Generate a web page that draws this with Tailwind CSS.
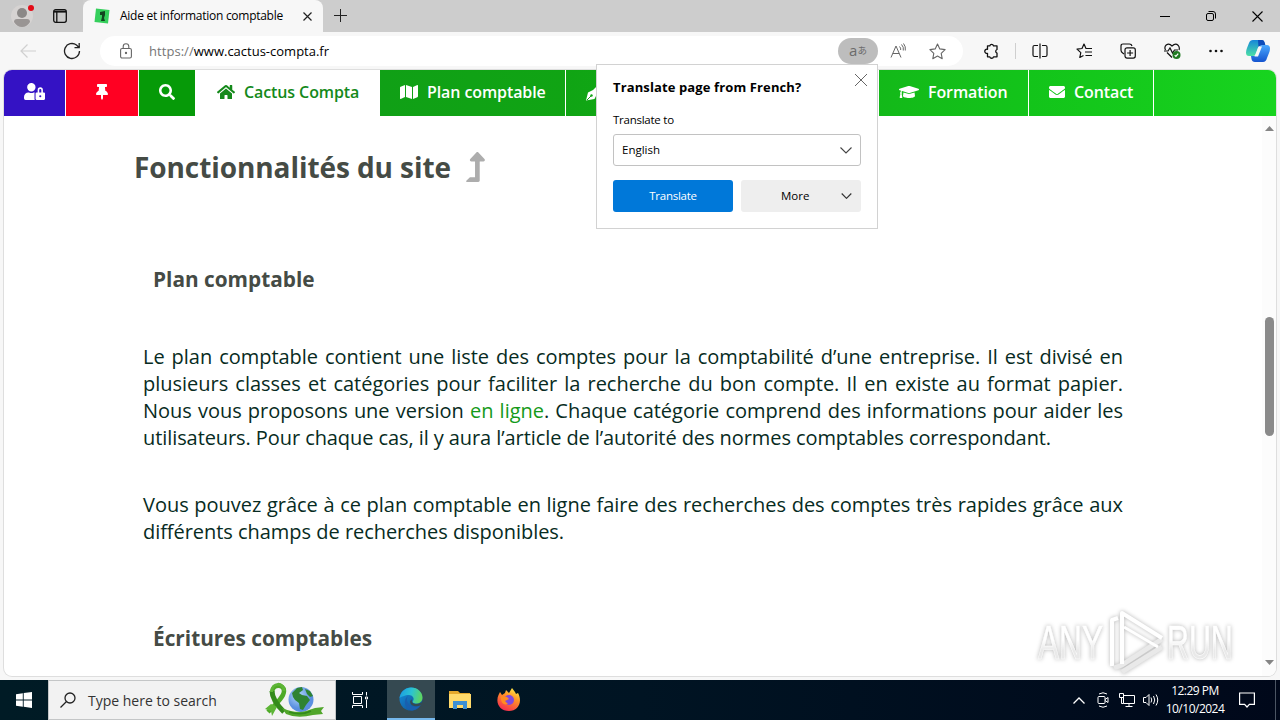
<!DOCTYPE html>
<html lang="fr">
  <head>
    <meta charset="UTF-8" />
    <meta name="viewport" content="width=device-width, initial-scale=1.0" />
    <title>Aide et information comptable</title>
    <script src="https://cdn.jsdelivr.net/npm/@tailwindcss/browser@4"></script>
  </head>
  <body class="w-[1280px] h-[720px] overflow-hidden flex flex-col bg-[#f7f7f7] font-['Open_Sans',sans-serif] text-black">
    <!-- tab strip -->
    <header class="h-8 shrink-0 flex bg-[#cdcdcd]">
      <div class="w-[83px] h-8 flex items-center pl-[11px] gap-[18px] bg-[#cacaca] rounded-br-md">
        <svg class="w-6 h-8" viewBox="0 0 24 32">
          <circle cx="11" cy="16" r="11" fill="#d6d3d2" />
          <circle cx="11" cy="13" r="5" fill="#8b8887" />
          <path d="M3 22q0-3 3-3h10q3 0 3 3-3 5-8 5t-8-5z" fill="#999594" />
          <circle cx="20" cy="8" r="3" fill="#e30b17" />
        </svg>
        <svg class="w-[14px] h-[14px]" viewBox="0 0 14 14" fill="none" stroke="#111" stroke-width="1.3">
          <rect x=".7" y=".7" width="12.6" height="12.6" rx="2" />
          <path d="M1 2.600h12" stroke-width="2" /><path d="M3.800 3v10" />
        </svg>
      </div>
      <div class="w-60 h-8 flex items-center bg-[#f7f7f7] rounded-t-lg pl-[11px]">
        <svg class="w-4 h-4" viewBox="0 0 16 16">
          <path d="M2 .5L15.500 2 14 15.500.500 14z" fill="#35cf5c" />
          <path d="M6 4l5-1v4l-1 3 1 3H7l1-4V7L6 7z" fill="#12451f" />
        </svg>
        <span class="ml-[10px] w-[168px] text-[12px] tracking-[-0.27px] whitespace-nowrap">Aide et information comptable</span>
        <svg class="ml-[15px] w-[9px] h-[9px]" viewBox="0 0 9 9" stroke="#222" stroke-width="1.2"><path d="M.5.5l8 8M8.500.5l-8 8" /></svg>
      </div>
      <svg class="ml-[11px] mt-[9px] w-[14px] h-[14px]" viewBox="0 0 14 14" stroke="#222"><path d="M6.500 0v13M0 6.500h13" /></svg>
      <div class="ml-auto mr-[17px] flex items-center gap-[36px]">
        <svg class="w-[10px] h-[10px]" viewBox="0 0 10 10" stroke="#000"><path d="M0 5.500h10" /></svg>
        <svg class="w-[10px] h-[10px]" viewBox="0 0 10 10" fill="none" stroke="#000"><rect x=".5" y="2.500" width="7" height="7" rx="1.500" /><path d="M2.500.5H7q2.500 0 2.500 2.500v4.500" /></svg>
        <svg class="w-[11px] h-[11px]" viewBox="0 0 11 11" stroke="#000" stroke-width="1.1"><path d="M.5.5l10 10M10.500.5l-10 10" /></svg>
      </div>
    </header>

    <!-- toolbar -->
    <div class="h-[38px] shrink-0 flex items-center pl-5">
      <svg class="w-4 h-4" viewBox="0 0 16 16" fill="none" stroke="#d0d0d0" stroke-width="1.2"><path d="M16 8H1M7.500 1.500L1 8l6.500 6.500" /></svg>
      <svg class="ml-[27px] w-[18px] h-[18px]" viewBox="0 0 18 18" fill="none" stroke="#222" stroke-width="1.300"><path d="M16.500 9A7.500 7.500 0 1 1 13.500 3L16 5.500M16.200 1v4.700h-4.700" /></svg>
      <div class="ml-[19px] w-[863px] h-[30px] rounded-full bg-white flex items-center">
        <svg class="ml-5 w-3 h-4" viewBox="0 0 12 16" fill="none" stroke="#666" stroke-width="1.100"><rect x=".6" y="5.500" width="10.800" height="9.500" rx="1.500" /><path d="M3.200 5.500V3.500a2.800 2.800 0 0 1 5.600 0v2" /><circle cx="6" cy="10" r=".6" fill="#666" /></svg>
        <span class="ml-[17px] pt-px text-[13px] whitespace-nowrap"><span class="text-[#767676] tracking-[0.05px]">https://</span><span>www.cactus-compta.fr</span></span>
        <div class="ml-auto mr-3 w-10 h-[26px] rounded-full bg-[#bdbdbd] flex items-center justify-center text-[#6b6b6b] leading-none">
          <span class="text-[15px] pb-px">a</span><span class="text-[9.500px] font-['Noto_Sans_CJK_JP',sans-serif]">あ</span>
        </div>
        <svg class="w-4 h-4" viewBox="0 0 16 16" fill="none" stroke="#666"><path d="M1 14.500L6 3l5 11.500M2.800 10.500h6.400M9.500 3.500q1.500 1.500 1.200 3.500M11.500 1.500q2.500 2.500 1.800 6M13.500.5q2.500 3 1.800 7" /></svg>
        <svg class="ml-[23px] mr-[17px] w-[17px] h-[17px]" viewBox="0 0 17 17" fill="none" stroke="#666" stroke-width="1.100" stroke-linejoin="round"><path d="M8.500 1l2.300 4.900 5.300.7-3.900 3.700 1 5.400-4.700-2.600-4.700 2.600 1-5.400L.9 6.600l5.300-.7z" /></svg>
      </div>
      <svg class="ml-[20px] w-4 h-4" viewBox="0 0 16 16" fill="none" stroke="#111" stroke-width="1.300" stroke-linejoin="round"><path d="M4.500 2.800h2.300a1.900 1.900 0 0 1 3.700 0h3.500v3.700a1.900 1.900 0 0 0 0 3.600v3.700h-3.500a1.900 1.900 0 0 1-3.700 0H4.500v-3.500a2.100 2.100 0 1 1 0-4z" /></svg>
      <div class="ml-4 w-px h-4 bg-[#cfcfcf]"></div>
      <svg class="ml-4 w-4 h-4" viewBox="0 0 16 16" fill="none" stroke="#111" stroke-width="1.200"><path d="M6 2.500H2.500q-1.500 0-1.500 1.500v8q0 1.500 1.500 1.500H6M10 2.500h3.500q1.500 0 1.500 1.500v8q0 1.500-1.500 1.500H10M8 .5v15" /></svg>
      <svg class="ml-[28px] w-[17px] h-4" viewBox="0 0 17 16" fill="none" stroke="#111" stroke-width="1.200" stroke-linejoin="round"><path d="M10 5.500L8 1 6 5.500l-5 .6 3.800 3.500L3.800 14.500 7.500 12.500M9.500 5.500H16M9 9h7M9.500 12.500H16" /></svg>
      <svg class="ml-[27px] w-4 h-4" viewBox="0 0 16 16" fill="none" stroke="#111" stroke-width="1.200"><path d="M4 11l-1-.8q-2-1.200-2-3V3q0-2 2-2h6.500q2 0 2.500 2" /><rect x="5" y="4.800" width="10.300" height="10.300" rx="2" /><path d="M10.100 7v6M7.100 10h6" /></svg>
      <svg class="ml-[28px] w-[17px] h-4" viewBox="0 0 17 16" fill="none" stroke="#111" stroke-width="1.200"><path d="M1.500 7Q0 4 2.200 2 5.200-.2 8 3q3.500-3.200 6-.8Q16 4.300 15 7M3 9.500L8 14.500M0 8h4l2-3 2.500 5 2-3H14" /><circle cx="12.500" cy="12" r="4" fill="#217b22" stroke="none" /><path d="M10.700 12.200l1.200 1.200 2.300-2.800" stroke="#fff" /></svg>
      <svg class="ml-[28px] w-[14px] h-4" viewBox="0 0 14 16" fill="#111"><circle cx="1.500" cy="8" r="1.300" /><circle cx="7" cy="8" r="1.300" /><circle cx="12.500" cy="8" r="1.300" /></svg>
      <svg class="ml-[23px] w-6 h-6" viewBox="0 0 24 24">
        <defs>
          <linearGradient id="cp1" x1="0" y1="0" x2="0" y2="1"><stop offset="0" stop-color="#1686d9" /><stop offset="1" stop-color="#4be0a6" /></linearGradient>
          <linearGradient id="cp2" x1="0" y1="0" x2="0" y2="1"><stop offset="0" stop-color="#4ba9ff" /><stop offset="1" stop-color="#1454cf" /></linearGradient>
        </defs>
        <path d="M7 1h8q3 0 3.500 3l.5 2h-3q-3 0-4 3l-2 6q-1 2-3 2H3Q0 17 0 13.500q0-2 1-4.500l2-5q1-3 4-3z" fill="url(#cp1)" />
        <path d="M12 1h4q2 0 2.500 2l1 3.500h-4q-2 0-3 2z" fill="#0e4dba" />
        <path d="M17 23H9q-3 0-3.500-3L5 17h3q2.500 0 3.500-3l2-6q1-2 3-2H21q3 0 3 3.500 0 2-1 4.500l-2 5q-1 4-4 4z" fill="url(#cp2)" />
        <path d="M12.500 7.500h3.500L12 17.500H8.500z" fill="#f7f7f7" />
      </svg>
    </div>

    <!-- page -->
    <main class="mx-1 h-[606px] shrink-0 flex flex-col bg-white rounded-lg overflow-hidden shadow-[0_0_0_1px_#dedede]">
      <nav class="h-[46px] shrink-0 flex gap-px text-white text-[16px] tracking-[-0.1px] font-semibold bg-white">
        <a class="w-[61px] flex items-center justify-center bg-[#3412c4]">
          <svg class="w-[21px] h-[17px] mt-[-3px]" viewBox="0 0 640 512" fill="currentColor"><path d="M224 256A128 128 0 1 0 96 128a128 128 0 0 0 128 128zm96 64a63.080 63.080 0 0 1 8.100-30.500c-4.800-.5-9.500-1.500-14.500-1.500h-16.700a174.080 174.080 0 0 1-145.800 0h-16.700A134.430 134.430 0 0 0 0 422.400V464a48 48 0 0 0 48 48h280.900a63.540 63.540 0 0 1-8.900-32zm288-32h-32v-80a80 80 0 0 0-160 0v80h-32a32 32 0 0 0-32 32v160a32 32 0 0 0 32 32h224a32 32 0 0 0 32-32V320a32 32 0 0 0-32-32zM496 432a32 32 0 1 1 32-32 32 32 0 0 1-32 32zm32-144h-64v-80a32 32 0 0 1 64 0z" /></svg>
        </a>
        <a class="w-[72px] flex items-center justify-center bg-[#ff0022]">
          <svg class="w-3 h-4 mt-[-2px]" viewBox="0 0 384 512" fill="currentColor"><path d="M298.028 214.267L285.793 96H328c13.255 0 24-10.745 24-24V24c0-13.255-10.745-24-24-24H56C42.745 0 32 10.745 32 24v48c0 13.255 10.745 24 24 24h42.207L85.972 214.267C37.465 236.820 0 277.261 0 328c0 13.255 10.745 24 24 24h136v104l24.800 51.600c3 5.900 11.400 5.900 14.300 0L224 456V352h136c13.255 0 24-10.745 24-24 0-51.183-37.983-91.420-85.972-113.733z" /></svg>
        </a>
        <a class="w-14 flex items-center justify-center bg-[#069a08]">
          <svg class="w-4 h-4 mt-[-2px]" viewBox="0 0 512 512" fill="currentColor"><path d="M505 442.700L405.300 343c-4.500-4.500-10.600-7-17-7H372c27.600-35.300 44-79.700 44-128C416 93.100 322.900 0 208 0S0 93.100 0 208s93.100 208 208 208c48.300 0 92.700-16.400 128-44v16.300c0 6.400 2.500 12.500 7 17l99.700 99.700c9.400 9.400 24.600 9.400 33.900 0l28.300-28.300c9.400-9.400 9.400-24.600.1-34zM208 336c-70.700 0-128-57.200-128-128 0-70.700 57.200-128 128-128 70.700 0 128 57.200 128 128 0 70.700-57.200 128-128 128z" /></svg>
        </a>
        <a class="w-[183px] flex items-center pl-[21px] pb-0.5 bg-white text-[#14891a]">
          <svg class="w-[18px] h-4 mr-[9px]" viewBox="0 0 576 512" fill="currentColor"><path d="M280.370 148.260L96 300.110V464a16 16 0 0 0 16 16l112.060-.29a16 16 0 0 0 15.920-16V368a16 16 0 0 1 16-16h64a16 16 0 0 1 16 16v95.640a16 16 0 0 0 16 16.050L464 480a16 16 0 0 0 16-16V300L295.670 148.260a12.190 12.190 0 0 0-15.300 0zM571.600 251.470L488 182.560V44.050a12 12 0 0 0-12-12h-56a12 12 0 0 0-12 12v72.610L318.470 43a48 48 0 0 0-61 0L4.340 251.470a12 12 0 0 0-1.600 16.900l25.500 31A12 12 0 0 0 45.150 301l235.220-193.740a12.190 12.190 0 0 1 15.300 0L530.900 301a12 12 0 0 0 16.900-1.600l25.500-31a12 12 0 0 0-1.700-16.930z" /></svg>
          <span class="whitespace-nowrap">Cactus Compta</span>
        </a>
        <a class="w-[185px] flex items-center pl-5 pb-0.5 bg-linear-to-r from-[#10a016] to-[#10a414]">
          <svg class="w-[18px] h-4 mr-[9px]" viewBox="0 0 576 512" fill="currentColor"><path d="M0 117.660v346.320c0 11.320 11.430 19.060 21.940 14.860L160 416V32L20.120 87.950A32 32 0 0 0 0 117.660zM192 416l192 64V96L192 32v384zM554.060 33.160L416 96v384l139.880-55.950A32 32 0 0 0 576 394.340V48.020c0-11.320-11.430-19.060-21.940-14.860z" /></svg>
          <span class="whitespace-nowrap">Plan comptable</span>
        </a>
        <a class="w-[312px] flex items-center pl-[20px] bg-linear-to-r from-[#10a414] to-[#13b817]">
          <svg class="w-4 h-4" viewBox="0 0 16 16"><path d="M0 15.500L2 7.500 7 5l5-5 4 4-5 5-2.500 5z" fill="currentColor" /><path d="M1 15l4-4" stroke="#10a414" /><circle cx="5.500" cy="10.500" r="1.200" fill="#10a414" /></svg>
        </a>
        <a class="w-[149px] flex items-center pl-5 pb-0.5 bg-linear-to-r from-[#13b919] to-[#13c41a]">
          <svg class="w-5 h-4 mr-[9px]" viewBox="0 0 640 512" fill="currentColor"><path d="M622.340 153.200L343.400 67.500c-15.200-4.670-31.600-4.670-46.790 0L17.660 153.200c-23.540 7.230-23.540 38.360 0 45.590l48.630 14.940c-10.670 13.190-17.230 29.280-17.880 46.900C38.780 266.150 32 276.110 32 288c0 10.780 5.680 19.850 13.860 25.650L20.330 428.530C18.110 438.520 25.710 448 35.940 448h56.110c10.240 0 17.840-9.480 15.620-19.470L82.140 313.650C90.320 307.850 96 298.780 96 288c0-11.570-6.470-21.250-15.660-26.870.76-15.020 8.440-28.300 20.690-36.720L296.600 284.500c9.060 2.780 26.440 6.250 46.790 0l278.950-85.700c23.550-7.240 23.550-38.360 0-45.600zM352.790 315.090c-28.530 8.760-52.840 3.920-65.590 0l-145.020-44.550L128 384c0 35.350 85.960 64 192 64s192-28.650 192-64l-14.180-113.470-145.030 44.560z" /></svg>
          <span class="whitespace-nowrap">Formation</span>
        </a>
        <a class="w-[124px] flex items-center pl-5 pb-0.5 bg-linear-to-r from-[#13c41a] to-[#15cb1c]">
          <svg class="w-4 h-4 mr-[9px]" viewBox="0 0 512 512" fill="currentColor"><path d="M502.300 190.800c3.900-3.100 9.700-.2 9.700 4.700V400c0 26.500-21.500 48-48 48H48c-26.500 0-48-21.500-48-48V195.600c0-5 5.700-7.800 9.700-4.700 22.400 17.400 52.100 39.500 154.100 113.600 21.100 15.400 56.700 47.800 92.200 47.600 35.700.3 72-32.800 92.300-47.600 102-74.100 131.600-96.300 154-113.700zM256 320c23.200.4 56.600-29.200 73.400-41.400 132.700-96.300 142.800-104.700 173.400-128.700 5.800-4.500 9.200-11.500 9.200-18.900v-19c0-26.500-21.500-48-48-48H48c-26.500 0-48 21.500-48 48v19c0 7.400 3.400 14.300 9.200 18.900 30.600 23.900 40.700 32.400 173.400 128.700 16.800 12.200 50.200 41.800 73.400 41.400z" /></svg>
          <span class="whitespace-nowrap">Contact</span>
        </a>
        <div class="flex-1 bg-linear-to-r from-[#15cb1c] to-[#17d41f]"></div>
      </nav>

      <div class="flex-1 flex">
        <article class="w-[1258px] pl-[130px] pt-[30px]">
          <div class="flex items-center h-[42px]">
            <h1 class="w-[332px] text-[28px] leading-[42px] tracking-[-0.08px] font-bold text-[#454b45] whitespace-nowrap">Fonctionnalités du site</h1>
            <svg class="w-[19px] h-[30px]" viewBox="0 0 320 512" fill="#adadad"><path d="M313.553 119.669L209.587 7.666c-9.485-10.214-25.676-10.229-35.174 0L70.438 119.669C56.232 134.969 67.062 160 88.025 160H152v272H68.024a12 12 0 0 0-8.485 3.515l-56 56C-4.021 499.074 1.333 512 12.024 512H208c13.255 0 24-10.745 24-24V160h63.966c20.878 0 31.851-24.969 17.587-40.331z" /></svg>
          </div>
          <h2 class="mt-[76px] ml-[19px] text-[20.8px] leading-[30px] font-bold text-[#454b45]">Plan comptable</h2>
          <div class="mt-[49px] ml-[9px] w-[980px] text-[20px] leading-[27px] tracking-[-0.02px] text-[#072b22] whitespace-nowrap [text-align-last:justify]">
            <p>Le plan comptable contient une liste des comptes pour la comptabilité d’une entreprise. Il est divisé en</p>
            <p>plusieurs classes et catégories pour faciliter la recherche du bon compte. Il en existe au format papier.</p>
            <p>Nous vous proposons une version <a class="text-[#159a1a]">en ligne</a>. Chaque catégorie comprend des informations pour aider les</p>
            <p class="w-[908px] tracking-[-0.08px]">utilisateurs. Pour chaque cas, il y aura l’article de l’autorité des normes comptables correspondant.</p>
            <p class="mt-10">Vous pouvez grâce à ce plan comptable en ligne faire des recherches des comptes très rapides grâce aux</p>
            <p class="w-[421px] tracking-[-0.05px]">différents champs de recherches disponibles.</p>
          </div>
          <h2 class="mt-[78px] ml-[19px] text-[20.8px] leading-[30px] font-bold text-[#454b45]">Écritures comptables</h2>
        </article>
        <div class="w-[14px] flex flex-col items-center bg-[#fcfcfc] pt-[9px] pb-[10px]">
          <svg class="w-[9px] h-[6px] ml-px" viewBox="0 0 9 6"><path d="M0 6l4.500-5L9 6z" fill="#858585" /></svg>
          <div class="mt-[186px] w-[9px] h-[119px] rounded-full bg-[#8a8a8a]"></div>
          <svg class="mt-auto w-[9px] h-[6px] ml-px" viewBox="0 0 9 6"><path d="M0 0l4.500 5L9 0z" fill="#858585" /></svg>
        </div>
      </div>
    </main>

    <!-- taskbar -->
    <footer class="mt-1 h-10 shrink-0 flex items-center bg-linear-to-r from-[#001b25] via-[#001423] to-[#00081a] text-white">
      <svg class="ml-4 w-4 h-4" viewBox="0 0 16 16" fill="#fff"><path d="M0 2.200L6.800 1.200v6.300H0zM7.700 1.100L16 0v7.500H7.700zM0 8.400h6.800v6.400L0 13.800zM7.700 8.400H16V16l-8.300-1.200z" /></svg>
      <div class="ml-[16px] w-72 h-10 flex items-center bg-[#f2f2f2] border border-[#c4c6c7] text-[#333]">
        <svg class="ml-[11px] w-4 h-4" viewBox="0 0 16 16" fill="none" stroke="#222" stroke-width="1.300"><circle cx="10" cy="6" r="5" /><path d="M6.500 9.500L.5 15.500" /></svg>
        <span class="ml-[12px] w-[177px] text-[14px] whitespace-nowrap">Type here to search</span>
        <svg class="w-[60px] h-9" viewBox="0 0 60 36">
          <defs><radialGradient id="sea" cx=".4" cy=".35"><stop offset="0" stop-color="#b4dafa" /><stop offset="1" stop-color="#5b8fe0" /></radialGradient></defs>
          <circle cx="36" cy="17.500" r="12.500" fill="url(#sea)" />
          <path d="M27 11l5-5 5-1 1 3-4 3 3 2 5 1 3 4-4 5-3 5-3-1-1-6-4-3-2-3zM40 7l5 2 3 5-3 1-3-3z" fill="#2f8332" />
          <path d="M7 10c1-8 12-8 12-1 0 6-8 13-16 21" fill="none" stroke="#4eaa26" stroke-width="4.500" />
          <path d="M7 9c0 7 4 13 12 21" fill="none" stroke="#338a1b" stroke-width="5" />
          <path d="M6.500 10C7 0 19 0 19 9" fill="none" stroke="#5db536" stroke-width="3" />
          <path d="M17 26q14 6 24 3l9-3 9-1-3 4 2 3-10 1q-16 4-27-1z" fill="#50a62a" />
          <path d="M24 30q12 4 22-1" fill="none" stroke="#338a1b" stroke-width="1.500" />
          <path d="M0 27l6 2 1 5 5-9-6-3z" fill="#5db536" />
        </svg>
      </div>
      <svg class="ml-4 w-4 h-4" viewBox="0 0 16 16" fill="none" stroke="#fff"><path d="M.5 0v2.500h10V0M.5 16v-2.500h10V16M1.500 4.500h8v7h-8zM14.500 0v3.500M14.500 8v8M13.500 5h2v2h-2z" /></svg>
      <div class="ml-[19px] w-12 h-10 flex items-center justify-center bg-[#354951] border-b-2 border-[#76b9ed]">
        <svg class="w-6 h-6" viewBox="0 0 24 24">
          <defs>
            <linearGradient id="e1" x1="0" y1=".3" x2="1" y2=".5"><stop offset="0" stop-color="#1b9de2" /><stop offset=".5" stop-color="#2bc3d2" /><stop offset="1" stop-color="#60d65c" /></linearGradient>
            <linearGradient id="e2" x1="0" y1="0" x2="1" y2="1"><stop offset="0" stop-color="#1490df" /><stop offset="1" stop-color="#114a8b" /></linearGradient>
          </defs>
          <circle cx="12" cy="12" r="11.500" fill="url(#e2)" />
          <path d="M.5 11C2 4 7 .5 12 .5c7 0 11.500 5 11.500 10 0 4-3 6-6 6-3 0-4.500-1-3.500-2.500 2-3-1-6-4-6-4 0-8 2-9.500 3z" fill="url(#e1)" />
          <path d="M9 9c-3 5 1 11 7 10.500 3 0 5-1.500 6-2.500-2 4.500-6 6.500-10 6.500C5 22 4 12 9 9z" fill="#195fae" />
          <path d="M13 12.500c-1 2.500 1 4.500 4.500 4.500 2.500 0 4.500-1 6.500-2.500L22 18c-4 2-9 1.500-10.500-1.500-1-2 0-3.500 1.500-4z" fill="#354951" />
        </svg>
      </div>
      <svg class="ml-[14px] w-[22px] h-[20px]" viewBox="0 0 22 20"><path d="M0 1h9l2 2h10v14H0z" fill="#e5a92c" /><path d="M0 4h22v14H0z" fill="#ffda6b" /><path d="M4 11h14v8h-4v-4H8v4H4z" fill="#3b8fd4" /></svg>
      <svg class="ml-[26px] w-6 h-6" viewBox="0 0 24 24">
        <defs><linearGradient id="ff" x1=".8" y1="0" x2=".3" y2="1"><stop offset="0" stop-color="#fff04a" /><stop offset=".4" stop-color="#ff9326" /><stop offset="1" stop-color="#f52a50" /></linearGradient></defs>
        <path d="M3 4l2 3 3-2 1-3 3 3 3-5 3 4 1 2 2-1c5 9 0 18-9 18S-2 15 1.500 7z" fill="url(#ff)" />
        <circle cx="12" cy="12" r="5" fill="#8049dc" />
        <path d="M4 8l6 1 2 2-4 2 3 3c-5 2-8-3-7-8z" fill="#ff8b21" />
      </svg>
      <div class="ml-auto flex items-center">
        <svg class="w-3 h-[7px]" viewBox="0 0 12 7" fill="none" stroke="#fff" stroke-width="1.300"><path d="M.5 6.500L6 1l5.500 5.500" /></svg>
        <svg class="ml-3 w-3 h-4" viewBox="0 0 12 16" fill="none" stroke="#fff"><rect x="1" y="4.500" width="7" height="7" rx="1" /><path d="M8 7.500l3-2v5l-3-2M2 2q4-2.500 8 0M2 14q4 2.500 8 0" /></svg>
        <svg class="ml-[10px] w-4 h-4" viewBox="0 0 16 16" fill="none" stroke="#fff"><path d="M4.500 3.500h11v8H4.500zM.5 1.500h4v4h-4zM2.500 5.500v6h2M10 11.500v3M6.500 14.500h7" /></svg>
        <svg class="ml-2 w-4 h-4" viewBox="0 0 16 16" fill="none" stroke="#fff"><path d="M.5 5.500h2.500l3-3v11l-3-3H.5zM8 5.500q1.500 2.500 0 5M10.500 4q2.500 4 0 8M13 2.500q3.500 5.500 0 11" /></svg>
        <div class="ml-[4px] w-[64px] text-center text-[12px] leading-[18px] tracking-[-0.5px] whitespace-nowrap"><div>12:29 PM</div><div>10/10/2024</div></div>
        <svg class="ml-[12px] w-4 h-4" viewBox="0 0 16 16" fill="none" stroke="#fff" stroke-width="1.200"><path d="M.6 1h14.800v11.400h-5L8 15l-2.400-2.600h-5z" /></svg>
        <div class="ml-5 mr-1 w-px h-10 bg-[#4b5563]"></div>
      </div>
    </footer>

    <!-- translate popup -->
    <div class="absolute left-[596px] top-[64px] w-[282px] h-[165px] bg-white border border-[#d2d2d2] px-4 text-[12px]">
      <div class="flex justify-between h-[45px]">
        <h3 class="pt-[13px] font-bold text-[13px] leading-[18px] tracking-[0.12px] whitespace-nowrap">Translate page from French?</h3>
        <svg class="mt-[9px] mr-[-6px] w-3 h-3 shrink-0" viewBox="0 0 12 12" stroke="#666"><path d="M0 0l12 12M12 0L0 12" /></svg>
      </div>
      <div class="h-6 leading-[20px] text-[11.500px] tracking-[-0.25px]">Translate to</div>
      <div class="h-8 flex items-center justify-between border border-[#c2c2c2] rounded-[3px] px-2">
        <span class="text-[11.500px]">English</span>
        <svg class="w-3 h-[7px]" viewBox="0 0 12 7" fill="none" stroke="#444" stroke-width="1.100"><path d="M.5.5L6 6l5.500-5.500" /></svg>
      </div>
      <div class="mt-[14px] flex gap-2">
        <div class="w-[120px] h-8 flex items-center justify-center rounded-[3px] bg-[#0078d9] text-white text-[11.500px] tracking-[-0.25px]">Translate</div>
        <div class="w-[120px] h-8 flex items-center rounded-[3px] bg-[#eeeeee] text-[11.500px]">
          <span class="w-[100px] pl-10">More</span>
          <svg class="w-[11px] h-[6px]" viewBox="0 0 11 6" fill="none" stroke="#333" stroke-width="1.200"><path d="M.7.5l4.800 4.800L10.300.5" /></svg>
        </div>
      </div>
    </div>

    <!-- watermark -->
    <svg class="absolute left-[1030px] top-[604px] w-[210px] h-[72px] overflow-visible drop-shadow-[0_0_2px_#b5b5b5]" viewBox="0 0 210 72">
      <defs><linearGradient id="wm" x1="0" y1="0" x2="0" y2="1"><stop offset=".45" stop-color="#fff" /><stop offset=".65" stop-color="#e9e9e9" /></linearGradient></defs>
      <g fill="url(#wm)" stroke="#fff" stroke-width=".6" font-family="'Liberation Sans', sans-serif" font-size="49">
        <text transform="translate(8 55) scale(.645 1)">ANY</text>
        <text transform="translate(137 55) scale(.62 1)">RUN</text>
      </g>
      <g fill="none" stroke-width="4" stroke-linejoin="round">
        <path d="M82 62V16l6-2" stroke="#fff" />
        <path d="M84 64l8-3 40-26M92 68l40-25" stroke="#e9e9e9" stroke-width="5" />
        <path d="M92 60V9l40 25" stroke="#fff" />
        <path d="M94 23l34 20" stroke="#fff" stroke-width="3" />
      </g>
    </svg>
  </body>
</html>
